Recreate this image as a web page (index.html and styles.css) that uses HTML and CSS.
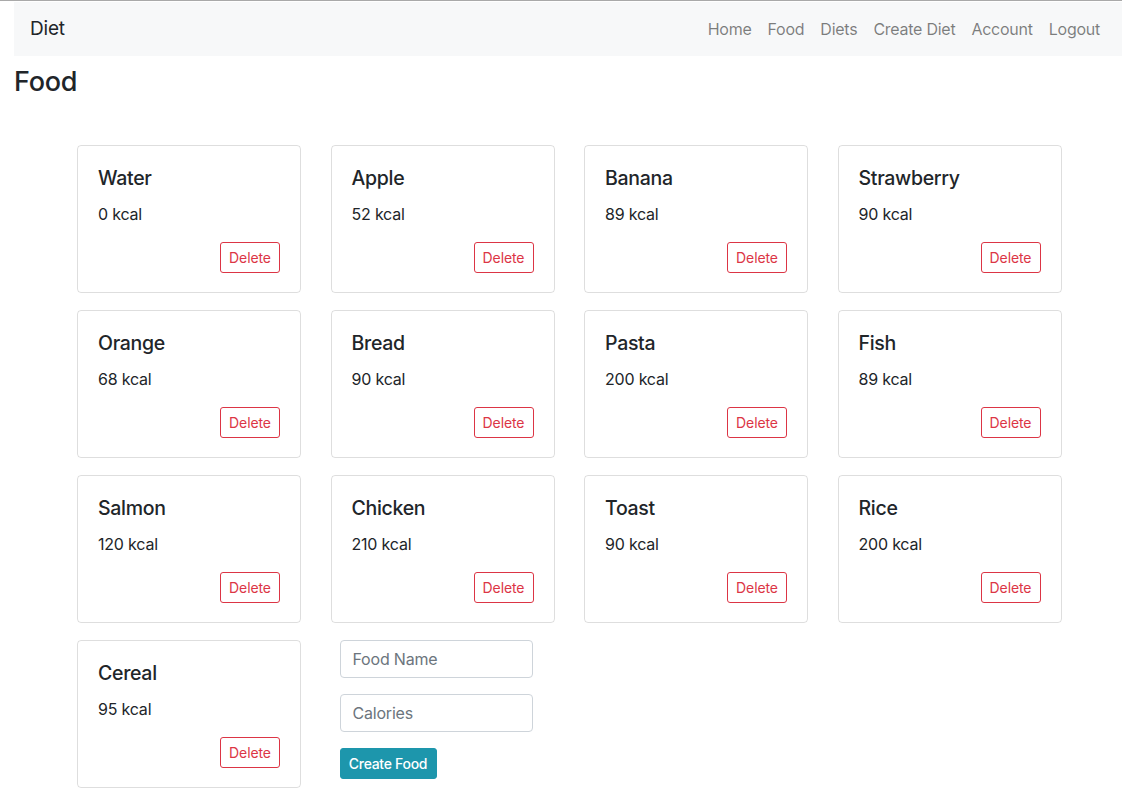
FILE: index.html
```html
<!DOCTYPE html>
<html lang="en">
<head>
<meta charset="utf-8">
<title>Food</title>
<link rel="stylesheet" href="styles.css">
</head>
<body>
<div class="page">
  <nav class="navbar">
    <a class="brand" href="#">Diet</a>
    <ul class="nav">
      <li><a href="#">Home</a></li>
      <li><a href="#">Food</a></li>
      <li><a href="#">Diets</a></li>
      <li><a href="#">Create Diet</a></li>
      <li><a href="#">Account</a></li>
      <li><a href="#">Logout</a></li>
    </ul>
  </nav>
  <h3 class="page-title">Food</h3>
  <div class="grid">
    <div class="card"><h5 class="card-title">Water</h5><p class="card-text">0 kcal</p><div class="actions"><button class="btn-delete">Delete</button></div></div>
    <div class="card"><h5 class="card-title">Apple</h5><p class="card-text">52 kcal</p><div class="actions"><button class="btn-delete">Delete</button></div></div>
    <div class="card"><h5 class="card-title">Banana</h5><p class="card-text">89 kcal</p><div class="actions"><button class="btn-delete">Delete</button></div></div>
    <div class="card"><h5 class="card-title">Strawberry</h5><p class="card-text">90 kcal</p><div class="actions"><button class="btn-delete">Delete</button></div></div>
    <div class="card"><h5 class="card-title">Orange</h5><p class="card-text">68 kcal</p><div class="actions"><button class="btn-delete">Delete</button></div></div>
    <div class="card"><h5 class="card-title">Bread</h5><p class="card-text">90 kcal</p><div class="actions"><button class="btn-delete">Delete</button></div></div>
    <div class="card"><h5 class="card-title">Pasta</h5><p class="card-text">200 kcal</p><div class="actions"><button class="btn-delete">Delete</button></div></div>
    <div class="card"><h5 class="card-title">Fish</h5><p class="card-text">89 kcal</p><div class="actions"><button class="btn-delete">Delete</button></div></div>
    <div class="card"><h5 class="card-title">Salmon</h5><p class="card-text">120 kcal</p><div class="actions"><button class="btn-delete">Delete</button></div></div>
    <div class="card"><h5 class="card-title">Chicken</h5><p class="card-text">210 kcal</p><div class="actions"><button class="btn-delete">Delete</button></div></div>
    <div class="card"><h5 class="card-title">Toast</h5><p class="card-text">90 kcal</p><div class="actions"><button class="btn-delete">Delete</button></div></div>
    <div class="card"><h5 class="card-title">Rice</h5><p class="card-text">200 kcal</p><div class="actions"><button class="btn-delete">Delete</button></div></div>
    <div class="card"><h5 class="card-title">Cereal</h5><p class="card-text">95 kcal</p><div class="actions"><button class="btn-delete">Delete</button></div></div>
    <form class="food-form">
      <input class="form-control" type="text" placeholder="Food Name">
      <input class="form-control" type="text" placeholder="Calories">
      <button class="btn-create" type="button">Create Food</button>
    </form>
  </div>
</div>
</body>
</html>
```
FILE: styles.css
```css
* { box-sizing: border-box; }
html, body { margin: 0; padding: 0; }
body {
  font-family: Inter, "Liberation Sans", sans-serif;
  font-size: 16px;
  line-height: 1.5;
  color: #212529;
  background: #fff;
  border-top: 1px solid #a9a9a9;
  overflow: hidden;
}
.page { padding-left: 14px; padding-top: 1px; }
.navbar {
  display: flex;
  align-items: center;
  justify-content: space-between;
  height: 54px;
  padding: 0 14px 0 16px;
  background: #f7f8f9;
}
.brand {
  font-size: 19px;
  color: #212529;
  text-decoration: none;
  letter-spacing: -0.2px;
}
.nav { display: flex; list-style: none; margin: 0; padding: 0; }
.nav a {
  display: block;
  padding: 0 8px;
  font-size: 16px;
  color: rgba(0,0,0,.5);
  text-decoration: none;
  letter-spacing: -0.25px;
}
.page-title {
  margin: 10px 0 0;
  font-size: 27px;
  font-weight: 500;
  line-height: 1.2;
  letter-spacing: -0.3px;
}
.grid {
  display: grid;
  grid-template-columns: repeat(4, 224px);
  column-gap: 29.5px;
  row-gap: 17px;
  margin: 46.5px 0 0 63px;
}
.card {
  border: 1px solid rgba(0,0,0,.13);
  border-radius: 4px;
  padding: 20px;
  height: 148px;
}
.card-title {
  margin: 0 0 12px;
  font-size: 19.5px;
  font-weight: 500;
  line-height: 24px;
  letter-spacing: -0.3px;
}
.card-text { margin: 0 0 16px; line-height: 24px; letter-spacing: -0.2px; }
.actions { display: flex; justify-content: flex-end; }
.btn-delete {
  font-family: inherit;
  font-size: 14px;
  line-height: 21px;
  padding: 4px 0;
  height: 31px;
  width: 60px;
  color: #dc3545;
  background: #fff;
  border: 1px solid #dc3545;
  border-radius: 3px;
  letter-spacing: -0.1px;
  white-space: nowrap;
}
.food-form {
  display: flex;
  flex-direction: column;
  align-items: flex-start;
  margin-left: 9px;
}
.form-control {
  width: 193px;
  height: 38px;
  margin-bottom: 16px;
  padding: 6px 12px;
  font-family: inherit;
  font-size: 16px;
  color: #495057;
  border: 1px solid #ced4da;
  border-radius: 4px;
  background: #fff;
  letter-spacing: -0.2px;
}
.form-control::placeholder { color: #6c757d; opacity: 1; }
.btn-create {
  font-family: inherit;
  font-size: 14px;
  line-height: 21px;
  padding: 4px 0;
  height: 31px;
  width: 97px;
  color: #fff;
  background: #1d96ac;
  border: 1px solid #1d96ac;
  border-radius: 3px;
  font-weight: 500;
  letter-spacing: -0.3px;
  white-space: nowrap;
}
```
